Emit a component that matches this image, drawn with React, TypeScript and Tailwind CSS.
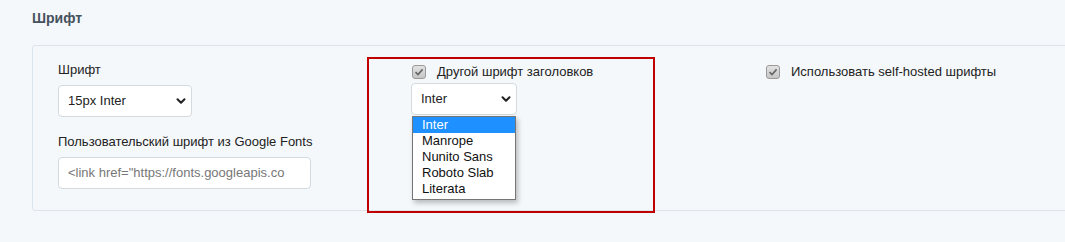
import { ChevronDown } from 'lucide-react';

function Check() {
  return (
    <span className="flex h-[14px] w-[14px] shrink-0 items-center justify-center rounded-[3px] border border-[#9a9a9a] bg-gradient-to-b from-[#e3e3e3] to-[#c6c6c6]">
      <svg width="10" height="10" viewBox="0 0 10 10">
        <path d="M1.5 5.2 L4 7.6 L8.6 2.4" fill="none" stroke="#666" strokeWidth="1.6" />
      </svg>
    </span>
  );
}

function FakeSelect({ value, width }: { value: string; width: string }) {
  return (
    <div
      className={`flex h-[32px] ${width} items-center justify-between rounded-[4px] border border-[#d3dae0] bg-white pl-[9px] pr-[3px] text-[13px] text-[#222]`}
    >
      <span>{value}</span>
      <ChevronDown className="h-[14px] w-[14px] text-[#222]" strokeWidth={3.5} />
    </div>
  );
}

const options = ['Inter', 'Manrope', 'Nunito Sans', 'Roboto Slab', 'Literata'];

export default function App() {
  return (
    <div
      className="relative h-[242px] w-[1065px] overflow-hidden bg-[#f5f8fa] pt-[9px]"
      style={{ fontFamily: '"Liberation Sans", Arial, sans-serif' }}
    >
      <h2 className="ml-[32px] text-[14px] font-bold leading-[18px] text-[#46525e]">Шрифт</h2>

      <div className="ml-[32px] mt-[18px] h-[166px] w-[1100px] rounded-[3px] border border-[#dde5ec] bg-[#f5f8fa] pl-[25px] pt-[16px]">
        <div className="grid grid-cols-[354px_354px_300px] text-[13px] text-[#222]">
          {/* col 1 */}
          <div className="flex flex-col">
            <label className="leading-[16px]">Шрифт</label>
            <div className="mt-[7px]">
              <FakeSelect value="15px Inter" width="w-[134px]" />
            </div>
            <label className="mt-[17px] leading-[16px]">Пользовательский шрифт из Google Fonts</label>
            <div className="mt-[7px] flex h-[32px] w-[253px] items-center rounded-[4px] border border-[#d3dae0] bg-white pl-[9px] text-[13px] text-[#777]">
              &lt;link href="https://fonts.googleapis.co
            </div>
          </div>

          {/* col 2 */}
          <div className="relative flex flex-col">
            <div className="flex items-center gap-[11px] pt-[2px] leading-[16px]">
              <Check />
              <span>Другой шрифт заголовков</span>
            </div>
            <div className="ml-[-1px] mt-[3px]">
              <FakeSelect value="Inter" width="w-[106px]" />
            </div>
            <ul className="absolute left-0 top-[54px] z-10 w-[104px] border border-[#767676] bg-white pb-[2px] text-[13px] leading-[16px] text-[#111] shadow-[2px_3px_5px_rgba(0,0,0,0.25)]">
              {options.map((o, i) => (
                <li
                  key={o}
                  className={`px-[9px] ${i === 0 ? 'bg-[#1e90ff] text-white' : ''}`}
                >
                  {o}
                </li>
              ))}
            </ul>
          </div>

          {/* col 3 */}
          <div className="flex flex-col">
            <div className="flex items-center gap-[11px] pt-[2px] leading-[16px]">
              <Check />
              <span>Использовать self-hosted шрифты</span>
            </div>
          </div>
        </div>
      </div>

      {/* annotation box */}
      <div className="pointer-events-none absolute left-[367px] top-[57px] h-[156px] w-[288px] border-2 border-[#c00000]" />
    </div>
  );
}
